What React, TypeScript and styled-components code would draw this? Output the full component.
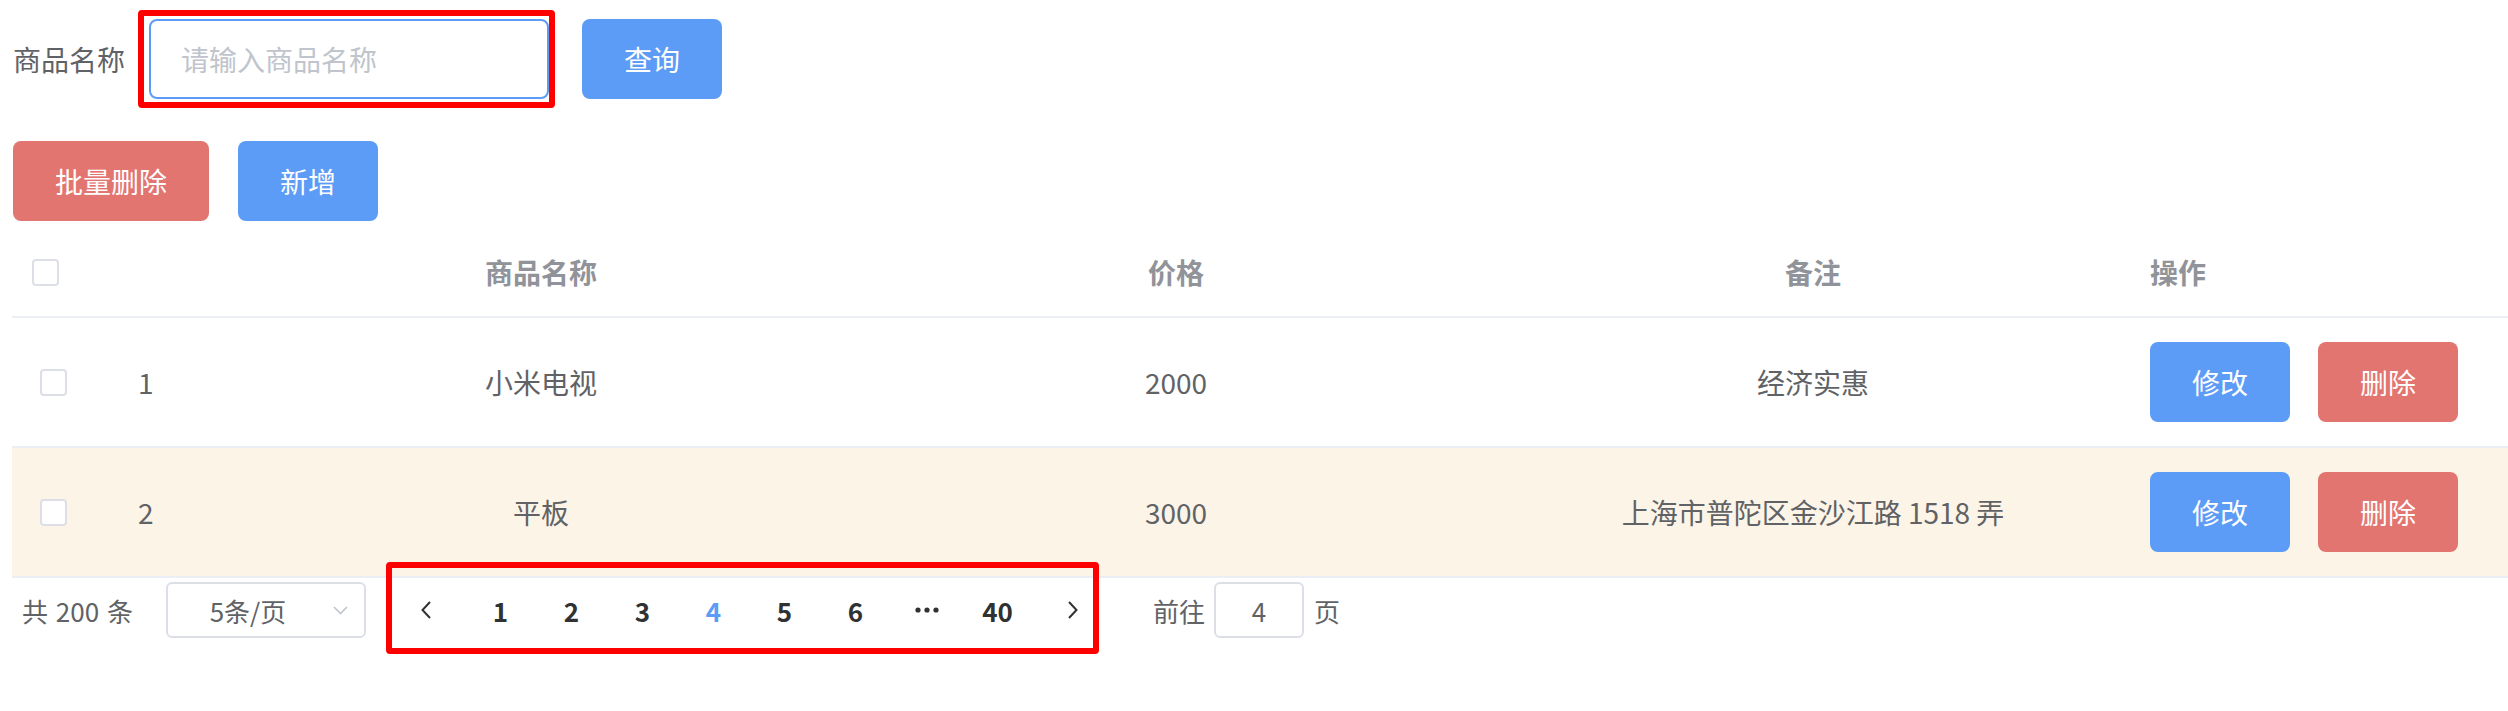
import styled, { createGlobalStyle } from 'styled-components';

interface IGoods {
  id: number;
  name: string;
  price: number;
  remark: string;
}

const goods: IGoods[] = [
  { id: 1, name: '小米电视', price: 2000, remark: '经济实惠' },
  { id: 2, name: '平板', price: 3000, remark: '上海市普陀区金沙江路 1518 弄' },
];

const pages = ['1', '2', '3', '4', '5', '6', 'more', '40'];
const currentPage = '4';

const BLUE = '#5c9cf7';
const RED = '#e37571';
const COLS = '100px 140px 578px 692px 582px 1fr';

const GlobalStyle = createGlobalStyle`
  body {
    margin: 0;
    background: #fff;
    font-family: "Noto Sans CJK SC", "Noto Sans", sans-serif;
  }
`;

const Page = styled.div`
  padding: 10px 0 60px 12px;
`;

const SearchRow = styled.div`
  display: flex;
  align-items: center;
`;

const Label = styled.span`
  margin: 0 13px 0 1px;
  font-size: 28px;
  line-height: 40px;
  color: #606266;
`;

// red annotation frame round the search input
const Highlight = styled.div`
  display: flex;
  padding: 3px 0 3px 5px;
  border: 6px solid #ff0000;
  border-radius: 4px;
`;

const SearchInput = styled.input`
  box-sizing: border-box;
  width: 400px;
  height: 80px;
  padding: 0 30px;
  border: 2px solid ${BLUE};
  border-radius: 8px;
  outline: none;
  font-family: inherit;
  font-size: 28px;
  color: #606266;
  &::placeholder {
    color: #c0c4cc;
  }
`;

const Button = styled.button<{ $variant: 'primary' | 'danger' }>`
  box-sizing: border-box;
  height: 80px;
  padding: 0 42px;
  border: none;
  border-radius: 8px;
  background: ${(p) => (p.$variant === 'danger' ? RED : BLUE)};
  color: #fff;
  font-family: inherit;
  font-size: 28px;
  line-height: 1;
  white-space: nowrap;
`;

const SearchButton = styled(Button)`
  margin-left: 27px;
`;

const Toolbar = styled.div`
  display: flex;
  gap: 29px;
  margin: 33px 0 0 1px;
`;

const Table = styled.div`
  margin-top: 7px;
`;

const HeadRow = styled.div`
  display: grid;
  grid-template-columns: ${COLS};
  align-items: center;
  height: 88px;
  border-bottom: 2px solid #ebeef5;
`;

const BodyRow = styled.div<{ $warn?: boolean }>`
  display: grid;
  grid-template-columns: ${COLS};
  align-items: center;
  height: 128px;
  border-bottom: 2px solid #ebeef5;
  background: ${(p) => (p.$warn ? '#fcf4e7' : '#fff')};
`;

const Cell = styled.div<{ $align?: 'left' | 'center'; $head?: boolean }>`
  text-align: ${(p) => p.$align || 'center'};
  font-size: 28px;
  line-height: 40px;
  font-weight: ${(p) => (p.$head ? 700 : 400)};
  color: ${(p) => (p.$head ? '#909399' : '#606266')};
  white-space: nowrap;
`;

const CheckCell = styled.div<{ $head?: boolean }>`
  display: flex;
  padding-left: ${(p) => (p.$head ? 20 : 28)}px;
`;

const Checkbox = styled.span`
  box-sizing: border-box;
  width: 27px;
  height: 27px;
  border: 2px solid #dcdfe6;
  border-radius: 4px;
  background: #fff;
`;

const IndexCell = styled(Cell)`
  padding-left: 26px;
`;

const OpsCell = styled.div`
  display: flex;
  gap: 28px;
  padding-left: 46px;
`;

const OpsHead = styled(Cell)`
  padding-left: 46px;
`;

const Pagination = styled.div`
  display: flex;
  align-items: center;
  height: 56px;
  padding: 4px 10px;
  font-size: 26px;
  color: #606266;
`;

const Total = styled.span`
  width: 144px;
  white-space: pre;
  word-spacing: 2px;
`;

const SizeSelect = styled.div`
  box-sizing: border-box;
  display: flex;
  align-items: center;
  width: 200px;
  height: 56px;
  border: 2px solid #dcdfe6;
  border-radius: 6px;
  svg {
    margin: 0 16px 0 5px;
  }
`;

const SelectText = styled.span`
  flex: 1;
  text-align: center;
`;

// red annotation frame drawn over the pager
const Pager = styled.div`
  position: relative;
  display: flex;
  align-items: center;
  margin-left: 20px;
  &::after {
    content: '';
    position: absolute;
    left: 0;
    right: 13px;
    top: -20px;
    bottom: -16px;
    border: 6px solid #ff0000;
    border-radius: 4px;
    pointer-events: none;
  }
`;

const ArrowButton = styled.button`
  display: flex;
  align-items: center;
  justify-content: center;
  width: 79px;
  height: 56px;
  padding: 0;
  border: none;
  background: none;
`;

const PageItem = styled.span<{ $active?: boolean }>`
  display: flex;
  align-items: center;
  justify-content: center;
  width: 71px;
  height: 56px;
  font-size: 26px;
  font-weight: 700;
  color: ${(p) => (p.$active ? BLUE : '#303133')};
`;

const Jumper = styled.div`
  display: flex;
  align-items: center;
  margin-left: 41px;
`;

const JumpInput = styled.input`
  box-sizing: border-box;
  width: 90px;
  height: 56px;
  margin: 0 10px 0 9px;
  border: 2px solid #dcdfe6;
  border-radius: 6px;
  outline: none;
  text-align: center;
  font-family: inherit;
  font-size: 26px;
  color: #606266;
`;

const Chevron = ({ dir }: { dir: 'left' | 'right' | 'down' }) => {
  if (dir === 'down') {
    return (
      <svg width="15" height="9" viewBox="0 0 15 9">
        <path d="M1 1 L7.5 7.5 L14 1" fill="none" stroke="#c0c4cc" strokeWidth="1.6" />
      </svg>
    );
  }
  return (
    <svg width="12" height="18" viewBox="0 0 12 18">
      <path
        d={dir === 'left' ? 'M10 1 L2.5 9 L10 17' : 'M2 1 L9.5 9 L2 17'}
        fill="none"
        stroke="#303133"
        strokeWidth="2"
      />
    </svg>
  );
};

const MoreDots = () => (
  <svg width="24" height="6" viewBox="0 0 24 6">
    <circle cx="3" cy="3" r="2.6" fill="#303133" />
    <circle cx="12" cy="3" r="2.6" fill="#303133" />
    <circle cx="21" cy="3" r="2.6" fill="#303133" />
  </svg>
);

const App = () => {
  return (
    <>
      <GlobalStyle />
      <Page>
        <SearchRow>
          <Label>商品名称</Label>
          <Highlight>
            <SearchInput placeholder="请输入商品名称" />
          </Highlight>
          <SearchButton $variant="primary">查询</SearchButton>
        </SearchRow>

        <Toolbar>
          <Button $variant="danger">批量删除</Button>
          <Button $variant="primary">新增</Button>
        </Toolbar>

        <Table>
          <HeadRow>
            <CheckCell $head>
              <Checkbox />
            </CheckCell>
            <Cell $head />
            <Cell $head>商品名称</Cell>
            <Cell $head>价格</Cell>
            <Cell $head>备注</Cell>
            <OpsHead $head $align="left">
              操作
            </OpsHead>
          </HeadRow>
          {goods.map((item, i) => (
            <BodyRow key={item.id} $warn={i % 2 === 1}>
              <CheckCell>
                <Checkbox />
              </CheckCell>
              <IndexCell $align="left">{item.id}</IndexCell>
              <Cell>{item.name}</Cell>
              <Cell>{item.price}</Cell>
              <Cell>{item.remark}</Cell>
              <OpsCell>
                <Button $variant="primary">修改</Button>
                <Button $variant="danger">删除</Button>
              </OpsCell>
            </BodyRow>
          ))}
        </Table>

        <Pagination>
          <Total>共 200 条</Total>
          <SizeSelect>
            <SelectText>5条/页</SelectText>
            <Chevron dir="down" />
          </SizeSelect>
          <Pager>
            <ArrowButton>
              <Chevron dir="left" />
            </ArrowButton>
            {pages.map((p) => (
              <PageItem key={p} $active={p === currentPage}>
                {p === 'more' ? <MoreDots /> : p}
              </PageItem>
            ))}
            <ArrowButton>
              <Chevron dir="right" />
            </ArrowButton>
          </Pager>
          <Jumper>
            前往
            <JumpInput defaultValue="4" />页
          </Jumper>
        </Pagination>
      </Page>
    </>
  );
};

export default App;
